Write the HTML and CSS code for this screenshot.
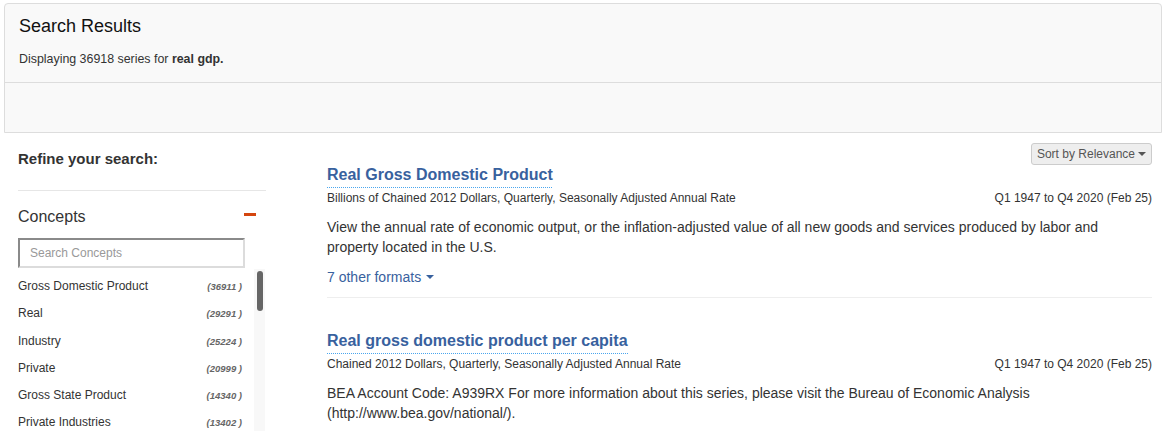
FILE: index.html
```html
<!DOCTYPE html>
<html lang="en">
<head>
<meta charset="utf-8">
<title>Search Results</title>
<link rel="stylesheet" href="styles.css">
</head>
<body>
<div class="panel">
  <div class="panel-head">
    <h1 class="panel-title">Search Results</h1>
    <p class="panel-sub">Displaying 36918 series for <strong>real gdp.</strong></p>
  </div>
  <div class="panel-foot"></div>
</div>

<div class="main">
  <aside class="sidebar">
    <h3 class="refine">Refine your search:</h3>
    <div class="rule"></div>
    <div class="facet-head">
      <span class="facet-title">Concepts</span>
      <span class="minus"></span>
    </div>
    <input class="facet-search" type="text" placeholder="Search Concepts">
    <div class="facet-list-wrap">
      <ul class="facet-list">
        <li><span class="name">Gross Domestic Product</span><span class="count">(36911 )</span></li>
        <li><span class="name">Real</span><span class="count">(29291 )</span></li>
        <li><span class="name">Industry</span><span class="count">(25224 )</span></li>
        <li><span class="name">Private</span><span class="count">(20999 )</span></li>
        <li><span class="name">Gross State Product</span><span class="count">(14340 )</span></li>
        <li><span class="name">Private Industries</span><span class="count">(13402 )</span></li>
      </ul>
      <div class="track"><div class="thumb"></div></div>
    </div>
  </aside>

  <section class="results">
    <div class="sort-row">
      <button class="sort-btn" type="button">Sort by Relevance <span class="caret"></span></button>
    </div>

    <div class="result">
      <div class="result-title"><a href="#">Real Gross Domestic Product</a></div>
      <div class="meta">
        <span>Billions of Chained 2012 Dollars, Quarterly, Seasonally Adjusted Annual Rate</span>
        <span>Q1 1947 to Q4 2020 (Feb 25)</span>
      </div>
      <p class="desc">View the annual rate of economic output, or the inflation-adjusted value of all new goods and services produced by labor and property located in the U.S.</p>
      <a class="formats" href="#">7 other formats <span class="caret"></span></a>
    </div>

    <div class="result">
      <div class="result-title"><a href="#">Real gross domestic product per capita</a></div>
      <div class="meta">
        <span>Chained 2012 Dollars, Quarterly, Seasonally Adjusted Annual Rate</span>
        <span>Q1 1947 to Q4 2020 (Feb 25)</span>
      </div>
      <p class="desc">BEA Account Code: A939RX For more information about this series, please visit the Bureau of Economic Analysis (http://www.bea.gov/national/).</p>
    </div>
  </section>
</div>
</body>
</html>
```

FILE: styles.css
```css
* { box-sizing: border-box; }

html, body {
  margin: 0;
  padding: 0;
  background: #fff;
  font-family: "Liberation Sans", Arial, sans-serif;
  color: #333;
  overflow: hidden;
}

.panel {
  margin: 3px 3px 0 4px;
  border: 1px solid #ddd;
  border-radius: 4px 4px 0 0;
  background: #f9f9f9;
}

.panel-head {
  padding: 12px 14px 15px 14px;
  border-bottom: 1px solid #ddd;
}

.panel-title {
  margin: 0;
  font-size: 18px;
  line-height: 21px;
  font-weight: normal;
  color: #111;
}

.panel-sub {
  margin: 14px 0 0 0;
  font-size: 12.4px;
  line-height: 16px;
  color: #333;
}

.panel-sub strong { font-weight: bold; }

.panel-foot { height: 49px; }

.main {
  display: flex;
  padding: 10px 13px 0 18px;
}

.sidebar {
  width: 248px;
  flex: none;
}

.refine {
  margin: 6px 0 0 0;
  font-size: 15px;
  line-height: 20px;
  font-weight: bold;
  color: #333;
}

.rule {
  margin-top: 21px;
  height: 1px;
  background: #e6e6e6;
}

.facet-head {
  margin-top: 16px;
  display: flex;
  align-items: center;
  justify-content: space-between;
  padding-right: 10px;
  height: 20px;
}

.facet-title {
  font-size: 16px;
  line-height: 20px;
  color: #333;
}

.minus {
  width: 12px;
  height: 3px;
  background: #d4450f;
  margin-top: -5px;
}

.facet-search {
  display: block;
  margin-top: 11px;
  width: 227px;
  height: 30px;
  padding: 0 10px;
  border-style: solid;
  border-width: 2px;
  border-color: #8a8a8a #dcdcdc #dcdcdc #8a8a8a;
  font-family: "Liberation Sans", Arial, sans-serif;
  font-size: 12px;
  color: #333;
  background: #fff;
  outline: none;
}

.facet-search::placeholder { color: #999; }

.facet-list-wrap {
  position: relative;
  margin-top: 5px;
}

.facet-list {
  list-style: none;
  margin: 0;
  padding: 0 24px 0 0;
}

.facet-list li {
  display: flex;
  justify-content: space-between;
  align-items: baseline;
  height: 27.25px;
  padding: 5px 0;
  font-size: 12px;
  line-height: 17.25px;
  color: #333;
}

.count {
  font-size: 9.5px;
  font-style: italic;
  font-weight: bold;
  color: #666;
}

.track {
  position: absolute;
  top: -4px;
  right: 1px;
  width: 11px;
  height: 200px;
  background: #f8f8f8;
}

.thumb {
  margin: 2px auto 0;
  width: 6px;
  height: 40px;
  border-radius: 3px;
  background: #666;
}

.results {
  margin-left: 61px;
  flex: 1;
  min-width: 0;
}

.sort-row {
  display: flex;
  justify-content: flex-end;
}

.sort-btn {
  height: 22px;
  padding: 2px 5px;
  border: 1px solid #ccc;
  border-radius: 3px;
  background: #eee;
  font-family: "Liberation Sans", Arial, sans-serif;
  font-size: 12px;
  line-height: 16px;
  color: #555;
  display: flex;
  align-items: center;
  gap: 3px;
}

.caret {
  display: inline-block;
  width: 0;
  height: 0;
  border-top: 4px solid currentColor;
  border-left: 4px solid transparent;
  border-right: 4px solid transparent;
  vertical-align: middle;
}

.result {
  padding-bottom: 10px;
  border-bottom: 1px solid #eee;
}

.result + .result {
  margin-top: 33px;
  border-bottom: none;
}

.result-title {
  display: flex;
  padding-top: 1px;
}

.result-title a {
  font-size: 16px;
  line-height: 18px;
  font-weight: bold;
  color: #38619e;
  text-decoration: none;
  padding-bottom: 4px;
  background-image: linear-gradient(to right, #4aa6ee 50%, transparent 50%);
  background-size: 2px 1px;
  background-repeat: repeat-x;
  background-position: left bottom;
}

.meta {
  margin-top: 2px;
  display: flex;
  justify-content: space-between;
  font-size: 12px;
  line-height: 16px;
  color: #333;
}

.desc {
  margin: 11px 0 0 0;
  font-size: 14px;
  line-height: 20px;
  color: #333;
}

.formats {
  display: inline-block;
  margin-top: 10px;
  font-size: 14px;
  line-height: 20px;
  color: #38619e;
  text-decoration: none;
}

.formats .caret { margin-left: 1px; margin-top: -2px; }
```
